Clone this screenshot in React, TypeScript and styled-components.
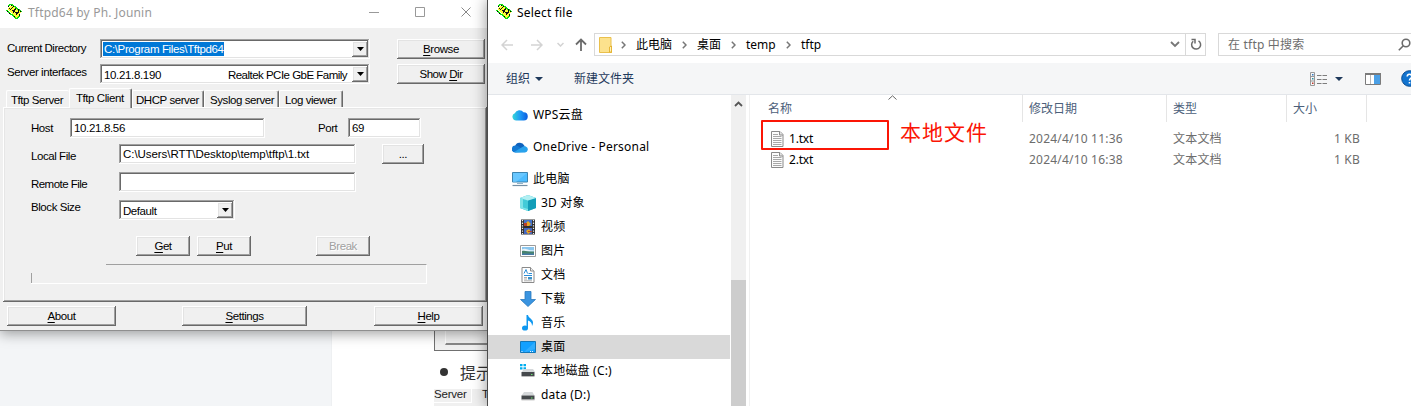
import React from 'react';
import styled, { createGlobalStyle, css } from 'styled-components';

const Global = createGlobalStyle`
  * { box-sizing: border-box; }
  html, body { margin: 0; padding: 0; overflow: hidden; background: #fff; }
  svg { display: block; flex: none; }
`;

const uiFont = css`font-family: 'Noto Sans', 'Noto Sans CJK SC', sans-serif; font-size: 12px;`;
const raised = css`box-shadow: inset -1px -1px #696969, inset 1px 1px #fff, inset -2px -2px #a0a0a0, inset 2px 2px #e3e3e3;`;
const sunken = css`box-shadow: inset -1px -1px #fff, inset 1px 1px #a0a0a0, inset -2px -2px #e3e3e3, inset 2px 2px #696969;`;

const Desktop = styled.div`
  position: relative; width: 1411px; height: 406px; overflow: hidden;
  white-space: nowrap; ${uiFont}
`;

/* ---------- document page behind the windows ---------- */
const Page = styled.div`display: flex; width: 488px; height: 406px; overflow: hidden; background: #f3f4f6;`;
const PageSide = styled.div`width: 332px; flex: none; background: #f3f5f7; box-shadow: inset -1px 0 #eef0f2;`;
const PageBody = styled.div`flex: 1; min-width: 0; padding-left: 102px; padding-top: 320px; background: #fff;`;
const Figure = styled.div`
  height: 31px; width: 70px; background: #f0f0f0; border-left: 1px solid #707070; border-bottom: 1px solid #707070;
  padding: 0 0 5px 10px;
`;
const FigureButton = styled.div`height: 25px; background: #f0f0f0; border-left: 1px solid #fff; border-bottom: 2px solid #888;`;
const BulletRow = styled.div`
  display: flex; align-items: center; height: 38px; padding: 3px 0 0 6px; gap: 12px; font-size: 16px; color: #333;
`;
const Dot = styled.i`width: 8px; height: 8px; border-radius: 50%; background: #333; flex: none;`;
const FigureTabs = styled.div`
  display: flex; gap: 10px; height: 17px; width: 70px; background: #f0f0f0; overflow: hidden; color: #222;
  font: 11.5px/11px 'Liberation Sans', Arial, sans-serif; letter-spacing: -.2px;
`;
const FigureTab = styled.span`width: 38px; height: 14px; border-right: 1px solid #fff; border-bottom: 1px solid #fff;`;

/* ---------- Tftpd64 window ---------- */
const TftpWindow = styled.section`
  position: absolute; left: 0; top: 0; width: 488px; height: 331px; background: #f0f0f0;
  border-bottom: 1px solid #8f8f8f; box-shadow: 0 3px 12px rgba(0, 0, 0, .36);
  display: flex; flex-direction: column; color: #000;
  font: 11.5px/14px 'Liberation Sans', Arial, sans-serif; letter-spacing: -.43px;
`;
const TitleBar = styled.header<{ $muted?: boolean }>`
  display: flex; align-items: center; height: 28px; flex: none; padding: 0 17px 4px 6px; gap: 6px; background: #fff;
  color: ${p => (p.$muted ? '#999' : '#000')}; ${uiFont} letter-spacing: .19px;
`;
const Caption = styled.span`flex: 1; margin-top: 2px;`;
const WindowButtons = styled.div`display: flex; gap: 36px; align-items: center;`;
const Form = styled.div`display: grid; grid-template-columns: 93px 270px 88px; column-gap: 0; row-gap: 5px; padding: 11px 0 0 7px; align-items: center;`;
const Text = styled.span<{ $ls?: number; $w?: number; $ml?: number; $shift?: number }>`
  flex: none;
  ${p => p.$ls !== undefined && `letter-spacing: ${p.$ls}px;`}
  ${p => p.$w && `width: ${p.$w}px;`}
  ${p => p.$ml && `margin-left: ${p.$ml}px;`}
  ${p => p.$shift && `margin-top: ${p.$shift}px;`}
`;
const Field = styled.div<{ $w: number; $ml?: number; $ls?: number }>`
  display: flex; align-items: center; flex: none; height: 20px; width: ${p => p.$w}px; margin-left: ${p => p.$ml || 0}px;
  padding: 0 2px 1px 4px; background: #fff; ${sunken}
  ${p => p.$ls !== undefined && `letter-spacing: ${p.$ls}px;`}
`;
const Combo = styled(Field)`padding: 0 2px 0 3px; justify-content: space-between;`;
const Selected = styled.span`background: #0078d7; color: #fff; height: 14px; line-height: 14px; width: 121px; padding-left: 1px; letter-spacing: -.37px;`;
const ComboButton = styled.span`display: grid; place-items: center; width: 16px; height: 16px; background: #f0f0f0; ${raised}`;
const Adapter = styled.span`margin: 1px 5px 0 auto; letter-spacing: -.52px;`;
const Button = styled.button<{ $w: number; $ml?: number; $off?: boolean }>`
  appearance: none; border: 0; padding: 0 0 1px; margin: 0 0 0 ${p => p.$ml || 0}px; flex: none;
  width: ${p => p.$w}px; height: 20px; background: #f0f0f0; font: inherit; letter-spacing: inherit; ${raised}
  color: ${p => (p.$off ? '#a0a0a0' : '#000')};
  ${p => p.$off && 'text-shadow: 1px 1px #fff;'}
  u { text-underline-offset: 2px; text-decoration-thickness: 1px; }
`;
const Tabs = styled.div`display: flex; align-items: flex-end; height: 20px; margin: 4px 0 -1px; padding-left: 6px; position: relative; z-index: 1;`;
const Tab = styled.div<{ $w: number; $on?: boolean; $open?: boolean; $pl?: number }>`
  width: ${p => p.$w}px; height: ${p => (p.$on ? 20 : 17)}px; margin-bottom: ${p => (p.$on ? 0 : 1)}px;
  padding: 2px 0 0 ${p => p.$pl ?? 4}px; background: #f0f0f0;
  border: solid #fff; border-width: 1px 0 0 1px; border-radius: 2px 2px 0 0;
  ${p => !p.$open && 'border-right: 1px solid #696969; box-shadow: inset -1px 0 #a0a0a0;'}
`;
const Panel = styled.div`
  margin-left: 3px; width: 484px; height: 195px; padding: 11px 0 0 28px; display: flex; flex-direction: column;
  box-shadow: inset -1px -1px #696969, inset 1px 1px #fff, inset -2px -2px #a0a0a0, inset 2px 2px #e6e6e6;
`;
const Line = styled.div<{ $mb: number }>`display: flex; align-items: center; height: 20px; flex: none; margin-bottom: ${p => p.$mb}px;`;
const Progress = styled.div`
  display: flex; align-items: flex-end; justify-content: space-between; width: 396px; height: 20px; border-bottom: 1px solid #fff;
`;
const ProgressStart = styled.i`width: 1px; height: 10px; background: #a0a0a0;`;
const ProgressTop = styled.i`width: 321px; height: 19px; border-top: 1px solid #a0a0a0; border-right: 1px solid #fff;`;
const Footer = styled.div`display: flex; padding: 4px 0 0 7px;`;

/* ---------- file dialog ---------- */
const Dialog = styled.section`
  position: absolute; left: 487px; top: 0; width: 924px; height: 406px; background: #fff; border-left: 1px solid #4c4c4c;
  box-shadow: 0 0 14px rgba(0, 0, 0, .42); display: flex; flex-direction: column; overflow: hidden; letter-spacing: .2px; line-height: 18px;
`;
const DialogTitle = styled(TitleBar)`height: 28px; padding: 0 0 4px 8px; gap: 5px;`;
const Nav = styled.div`display: flex; align-items: center; height: 36px; flex: none; padding: 5px 0 8px 13px;`;
const NavIcon = styled.span<{ $mr: number }>`margin-right: ${p => p.$mr}px;`;
const Address = styled.div`display: flex; align-items: center; width: 612px; height: 23px; flex: none; border: 1px solid #d9d9d9; padding-left: 4px;`;
const Crumb = styled.span<{ $w: number }>`width: ${p => p.$w}px; flex: none; letter-spacing: 0;`;
const CrumbArrow = styled.span`width: 5px; margin: 0 10px 0 10px; flex: none; &:first-of-type { margin-left: 9px; }`;
const Refresh = styled.span`display: grid; place-items: center; width: 20px; height: 21px; margin-left: 5px; border-left: 1px solid #d9d9d9;`;
const Search = styled.div`
  display: flex; align-items: center; justify-content: space-between; width: 200px; height: 23px; flex: none; margin-left: 12px;
  border: 1px solid #d9d9d9; padding: 0 6px 0 9px; color: #6d6d6d;
`;
const Toolbar = styled.div`
  display: flex; align-items: center; height: 31px; margin-top: -1px; flex: none; background: #f5f6f7; border-bottom: 1px solid #e3e6ea;
  padding-left: 18px; color: #1e395b; letter-spacing: 0; box-sizing: content-box;
`;
const Content = styled.div`display: flex; flex: 1; min-height: 0;`;
const Tree = styled.nav`width: 243px; flex: none; padding-top: 8px;`;
const Node = styled.div<{ $level: number; $gap?: boolean; $on?: boolean }>`
  display: flex; align-items: center; gap: 5px; height: 24px; width: 242px; padding-left: ${p => (p.$level ? 32 : 24)}px;
  margin-bottom: ${p => (p.$gap ? 8 : 0)}px; background: ${p => (p.$on ? '#d9d9d9' : 'transparent')};
`;
const Scrollbar = styled.div`width: 15px; flex: none; background: #f0f0f0; display: flex; flex-direction: column; align-items: center; justify-content: space-between; padding-top: 6px;`;
const Thumb = styled.i`width: 15px; height: 126px; background: #cdcdcd;`;
const Files = styled.div`flex: 1; min-width: 0; margin-left: 3px; border-left: 1px solid #f0f0f0; position: relative;`;
const grid = css`display: grid; grid-template-columns: 273px 144px 120px 80px; align-items: center;`;
const Head = styled.div`${grid} height: 27px; color: #4c607a; letter-spacing: 0;`;
const HeadCell = styled.div<{ $first?: boolean }>`
  height: 27px; line-height: 27px; padding-left: ${p => (p.$first ? 18 : 6)}px; border-right: 1px solid #e5e5e5;
`;
const FileRow = styled.div`${grid} height: 21px; color: #6d6d6d;`;
const Name = styled.div`display: flex; align-items: center; gap: 5px; padding-left: 21px; color: #000; letter-spacing: -.2px;`;
const Cell = styled.div<{ $right?: boolean }>`padding-left: 6px; padding-right: 7px; text-align: ${p => (p.$right ? 'right' : 'left')};`;
const Rows = styled.div`padding-top: 6px;`;
const SortMark = styled.span`position: absolute; left: 138px; top: 0;`;
const Highlight = styled.div`position: absolute; left: 11px; top: 25px; width: 128px; height: 30px; border: 2px solid #fb1505; border-radius: 1px;`;
const Note = styled.div`
  position: absolute; left: 150px; top: 24px; color: #fb1505; letter-spacing: 1px;
  font: 400 21px/28px 'Liberation Serif', 'Noto Sans CJK SC', serif;
`;

/* ---------- icons ---------- */
const AppIcon = () => (
  <svg width="16" height="16" viewBox="0 0 16 16" shapeRendering="crispEdges">
    <path d="M1 5L5 1L15 8L11 14Z" fill="#ff3" />
    <path d="M2 2L5 0L16 8M0 6L11 15L14 11" fill="none" stroke="#1d1" strokeWidth="1.3" />
    <path d="M2 3L6 1L15 8M1 7L10 14" stroke="#000" strokeWidth="1" strokeDasharray="1 2" fill="none" />
    <path d="M4 6l3-3M7 9l3-5M10 11l3-4" stroke="#111" strokeWidth="1.3" fill="none" />
    <path d="M6 6h2v1H6zM9 8h2v1H9zM3 4h1v1H3zM13 10h1v2h-1z" fill="#111" />
  </svg>
);
const Down = ({ c = '#000', w = 7 }: { c?: string; w?: number }) => (
  <svg width={w} height="4" viewBox="0 0 7 4" preserveAspectRatio="none"><path d="M0 0H7L3.5 4Z" fill={c} /></svg>
);
const Chevron = ({ d, w, h, c, s = 1.5 }: { d: string; w: number; h: number; c: string; s?: number }) => (
  <svg width={w} height={h} viewBox={`0 0 ${w} ${h}`} fill="none" stroke={c} strokeWidth={s}><path d={d} /></svg>
);
const Minimize = () => <Chevron d="M0 5.5h10" w={10} h={10} c="#999" s={1} />;
const Maximize = () => <Chevron d="M.5 .5h9v9h-9z" w={10} h={10} c="#999" s={1} />;
const Close = () => <Chevron d="M.5 .5l9 9M9.5 .5l-9 9" w={10} h={10} c="#888" s={1} />;
const Folder = () => (
  <svg width="13" height="16" viewBox="0 0 13 16"><path d="M.5.5h11.500v9H13v6H.5z" fill="#fce28d" stroke="#eac04c" /><path d="M10.500 10v5h2v-6z" fill="#fff1b8" stroke="#dfa91f" strokeWidth=".8" /></svg>
);
const FileIcon = () => (
  <svg width="13" height="16" viewBox="0 0 13 16">
    <path d="M.5.5H9L12 3.500V15.500H.5z" fill="#fcfcfc" stroke="#8a8a8a" />
    <path d="M8.500.5V4H12" fill="#e5e5e5" stroke="#8a8a8a" />
    <path d="M2 3.500h5M2 5.500h8.500M2 7.500h8.500M2 9.500h8.500M2 11.500h8.500M2 13.500h8.500" stroke="#a8a8a8" />
  </svg>
);
const icons: Record<string, React.ReactNode> = {
  wps: <><defs><linearGradient id="wps" x1="0" x2="1"><stop stopColor="#35d6d8" /><stop offset=".5" stopColor="#1e9af5" /><stop offset="1" stopColor="#0b5be0" /></linearGradient></defs><path d="M4.500 13.500A3.800 3.800 0 0 1 2.800 6.200 5 5 0 0 1 11.500 5.300a4.100 4.100 0 0 1 .3 8.200z" fill="url(#wps)" /></>,
  onedrive: <><path d="M3 7.500A5 5 0 0 1 12.300 6.500L13 9 3 12z" fill="#0f62bd" /><path d="M3.500 13.500a3.500 3.500 0 0 1-.3-7c1.800 0 3 .6 4.500 1.700L14 13z" fill="#1379d3" /><path d="M2.200 13L9.500 8.600c2-1.300 3.300-1.700 4.600-.8a3 3 0 0 1-1.100 5.700H3.500z" fill="#28a2ec" /></>,
  pc: <><path d="M.5 1.500h15v9.500H.5z" fill="#4dbcff" stroke="#3c84b0" /><path d="M1 2h14L4 11H1z" fill="#7bcfff" opacity=".6" /><path d="M5 12.500h6" stroke="#93b3c8" /><path d="M.5 14.500h15" stroke="#7590a5" strokeWidth="1.2" /></>,
  cube: <><path d="M0 3L8 0l8 3v10l-8 3-8-3z" fill="#2fc0d2" /><path d="M0 3l8 2.500V16l-8-3z" fill="#7ee3e8" /><path d="M3 4l5 1.500V14l-5-1.500z" fill="#42cbd8" /><path d="M8 5.500L16 3v10l-8 3z" fill="#129db8" /><path d="M0 3l8-3 8 3-8 2.500z" fill="#b2eff2" /></>,
  video: <><path d="M1 .5h14v15H1z" fill="#2f2f2f" /><path d="M4 1h8v6H4z" fill="#4372c9" /><path d="M4 9h8v6H4z" fill="#4568c0" /><path d="M5 5l3-3 3 3-2 2H6zM6 12l3-2 2 3-3 2z" fill="#e8a821" /><path d="M4 4h3v3H4zM8 12h4v1H8z" fill="#b9402b" /><path d="M2.500 1v14M13.500 1v14" stroke="#eee" strokeWidth="1.2" strokeDasharray="1.300 1.300" /></>,
  image: <><path d="M.5 2.500h15v11H.5z" fill="#fff" stroke="#9b9b9b" /><path d="M2 4h12v8H2z" fill="#8ac6ee" /><path d="M2 6.500c3-2 5 1 12 1v1H2z" fill="#e8f4fb" /><path d="M2 8c3-1 6 1 12 .5V12H2z" fill="#48836d" /><path d="M2 10.500h12V12H2z" fill="#467aa6" /></>,
  doc: <><path d="M2 .5h8.500L14 4v11.500H2z" fill="#fff" stroke="#8a8a8a" /><path d="M10.500.5V4H14" fill="#eee" stroke="#8a8a8a" /><path d="M4 6.500L6 2.500l1.500 4M4 8.500h8M8.500 6.500H12" fill="none" stroke="#2c8dd6" /><path d="M4 10.500h3M4 12h3M4 13.800h8" stroke="#999" strokeWidth=".8" /><path d="M8 10h4v2.500H8z" fill="#3d92c9" /></>,
  download: <path d="M5 .5h6v8h4.500L8 15.500.5 8.500H5z" fill="#3a94e0" stroke="#2878bd" strokeWidth=".8" />,
  music: <><ellipse cx="5" cy="13" rx="3" ry="2.600" fill="#0f98f0" /><path d="M6.500 13V0H8c.3 3 5 4 5 7.500 0 1.500-.4 2.500-1 3.500.2-3-1.500-4.500-4-5.500v7.500z" fill="#0f98f0" /></>,
  desktop: <><path d="M.5 2.500h15v11H.5z" fill="#12a0ff" stroke="#1477b8" /><path d="M15 3v7L6 13H4z" fill="#42b5ff" opacity=".6" /><path d="M1.500 12.500h1M10 12.500h4" stroke="#e8f5ff" strokeDasharray="1 1" /></>,
  diskc: <><path d="M0 1h2.500v2.200H0zM3.500 1H6v2.200H3.500zM0 4.200h2.500v2.200H0zM3.500 4.200H6v2.200H3.500z" fill="#00adef" /><path d="M4 6h9l2 3H1.500z" fill="#d5d8da" /><path d="M1.500 9h13v4h-13z" fill="#45494c" /><path d="M1.500 13h13v.8h-13z" fill="#aaa" /><path d="M11 11h1.500v1H11z" fill="#6be36b" /></>,
  disk: <><path d="M4 5h8.500l2 3.500H1.500z" fill="#d5d8da" /><path d="M1.500 8.500h13v4h-13z" fill="#45494c" /><path d="M1.500 12.500h13v.8h-13z" fill="#aaa" /><path d="M11 10.500h1.500v1H11z" fill="#6be36b" /></>,
};
const Icon = ({ name }: { name: string }) => <svg width="16" height="16" viewBox="0 0 16 16">{icons[name]}</svg>;

type TreeNode = { icon: string; label: string; level: number; gap?: boolean; on?: boolean };
const tree: TreeNode[] = [
  { icon: 'wps', label: 'WPS云盘', level: 0, gap: true },
  { icon: 'onedrive', label: 'OneDrive - Personal', level: 0, gap: true },
  { icon: 'pc', label: '此电脑', level: 0 },
  { icon: 'cube', label: '3D 对象', level: 1 },
  { icon: 'video', label: '视频', level: 1 },
  { icon: 'image', label: '图片', level: 1 },
  { icon: 'doc', label: '文档', level: 1 },
  { icon: 'download', label: '下载', level: 1 },
  { icon: 'music', label: '音乐', level: 1 },
  { icon: 'desktop', label: '桌面', level: 1, on: true },
  { icon: 'diskc', label: '本地磁盘 (C:)', level: 1 },
  { icon: 'disk', label: 'data (D:)', level: 1 },
];
const files = [
  { name: '1.txt', date: '2024/4/10 11:36' },
  { name: '2.txt', date: '2024/4/10 16:38' },
];
const crumbs: [string, number][] = [['此电脑', 36], ['桌面', 24], ['temp', 30], ['tftp', 20]];

const Arrow = () => <ComboButton><Down /></ComboButton>;

function Tftpd() {
  return (
    <TftpWindow>
      <TitleBar $muted>
        <AppIcon />
        <Caption>Tftpd64 by Ph. Jounin</Caption>
        <WindowButtons><Minimize /><Maximize /><Close /></WindowButtons>
      </TitleBar>
      <Form>
        <Text $ls={-.5} $shift={-2}>Current Directory</Text>
        <Combo $w={270}><Selected>C:\Program Files\Tftpd64</Selected><Arrow /></Combo>
        <Button $w={88} $ml={27}><u>B</u>rowse</Button>
        <Text $shift={-4}>Server interfaces</Text>
        <Combo $w={270}><Text $ls={-.34} $ml={1} $shift={1}>10.21.8.190</Text><Adapter>Realtek PCIe GbE Family</Adapter><Arrow /></Combo>
        <Button $w={88} $ml={27}>Show <u>D</u>ir</Button>
      </Form>
      <Tabs>
        <Tab $w={63} $open>Tftp Server</Tab>
        <Tab $w={63} $on $pl={6}>Tftp Client</Tab>
        <Tab $w={72} $pl={3}>DHCP server</Tab>
        <Tab $w={75} $pl={5}>Syslog server</Tab>
        <Tab $w={64} $pl={5}>Log viewer</Tab>
      </Tabs>
      <Panel>
        <Line $mb={6}>
          <Text $w={39}>Host</Text><Field $w={195} $ls={-.34}>10.21.8.56</Field>
          <Text $ml={53} $w={30}>Port</Text><Field $w={73}>69</Field>
        </Line>
        <Line $mb={8}>
          <Text $w={88} $shift={4}>Local File</Text><Field $w={237} $ls={-.06}>C:\Users\RTT\Desktop\temp\tftp\1.txt</Field>
          <Button $w={42} $ml={26}>...</Button>
        </Line>
        <Line $mb={8}><Text $w={88} $ls={-.54} $shift={4}>Remote File</Text><Field $w={237} /></Line>
        <Line $mb={16}><Text $w={88} $shift={-6}>Block Size</Text><Combo $w={116}><Text $ml={1} $shift={1}>Default</Text><Arrow /></Combo></Line>
        <Line $mb={8}>
          <Button $w={54} $ml={105}><u>G</u>et</Button>
          <Button $w={54} $ml={7}><u>P</u>ut</Button>
          <Button $w={54} $ml={65} $off>Break</Button>
        </Line>
        <Progress><ProgressStart /><ProgressTop /></Progress>
      </Panel>
      <Footer>
        <Button $w={109}><u>A</u>bout</Button>
        <Button $w={125} $ml={66}><u>S</u>ettings</Button>
        <Button $w={109} $ml={67}><u>H</u>elp</Button>
      </Footer>
    </TftpWindow>
  );
}

function SelectFile() {
  return (
    <Dialog>
      <DialogTitle><AppIcon /><Caption>Select file</Caption></DialogTitle>
      <Nav>
        <NavIcon $mr={18}><Chevron d="M12 6H1M6 1L1 6l5 5" w={12} h={12} c="#d3d3d3" /></NavIcon>
        <NavIcon $mr={14}><Chevron d="M0 6h11M6 1l5 5-5 5" w={12} h={12} c="#d3d3d3" /></NavIcon>
        <NavIcon $mr={11}><Chevron d="M.5 1L3.500 4l3-3" w={7} h={5} c="#d3d3d3" /></NavIcon>
        <NavIcon $mr={7}><Chevron d="M6 13V1.500M1 6.500l5-5 5 5" w={12} h={13} c="#6b6b6b" s={1.8} /></NavIcon>
        <Address>
          <Folder />
          {crumbs.map(([label, w]) => (
            <React.Fragment key={label}>
              <CrumbArrow><Chevron d="M.8 .8L4 4 .8 7.200" w={5} h={8} c="#777" /></CrumbArrow>
              <Crumb $w={w}>{label}</Crumb>
            </React.Fragment>
          ))}
          <Text $ml={349}><Chevron d="M1 1l4 4 4-4" w={10} h={7} c="#777" s={1.8} /></Text>
          <Refresh>
            <svg width="12" height="13" viewBox="0 0 12 13" fill="none" stroke="#6b6b6b" strokeWidth="1.500"><path d="M8.500 2.800A4.500 4.500 0 1 1 3.200 3.200M1.500 1.500H5V5.500" /></svg>
          </Refresh>
        </Address>
        <Search>
          在 tftp 中搜索
          <svg width="13" height="13" viewBox="0 0 13 13" fill="none" stroke="#6b6b6b" strokeWidth="1.600"><circle cx="8" cy="5" r="3.800" /><path d="M5.300 7.700L.8 12.200" /></svg>
        </Search>
      </Nav>
      <Toolbar>
        组织<Text $ml={5}><Down c="#1e395b" w={8} /></Text>
        <Text $ml={31}>新建文件夹</Text>
        <Text $ml={676}>
          <svg width="17" height="14" viewBox="0 0 17 14" fill="none">
            <path d="M.5.5h4v13h-4zM.5 4.500h4M.5 9h4" stroke="#999" /><path d="M7 3.500h10M7 7.500h10M7 11.500h10" stroke="#7d7d7d" strokeDasharray="4.500 1" />
            <path d="M2 2h1.500v1.500H2z" fill="#3578c0" /><path d="M2 6h1.500v1.500H2z" fill="#2c8fa0" /><path d="M2 10.500h1.500V12H2z" fill="#c0392b" />
          </svg>
        </Text>
        <Text $ml={8}><Down c="#1e395b" w={8} /></Text>
        <Text $ml={22}>
          <svg width="16" height="12" viewBox="0 0 16 12"><path d="M.5.5h15v11H.5z" fill="#fff" stroke="#7b7b7b" /><path d="M0 0h16v2H0z" fill="#7b7b7b" /><path d="M9 2h6v9H9z" fill="#4ba0e6" /><path d="M5.500 2v9" stroke="#bbb" /></svg>
        </Text>
        <Text $ml={20}>
          <svg width="17" height="17" viewBox="0 0 17 17"><circle cx="8.500" cy="8.500" r="7.800" fill="#1173cf" stroke="#0a4c91" /><path d="M6.200 6.500a2.300 2.300 0 1 1 3.500 2q-1.200.8-1.200 2M8.500 12v1.600" fill="none" stroke="#fff" strokeWidth="1.600" /></svg>
        </Text>
      </Toolbar>
      <Content>
        <Tree>
          {tree.map(n => <Node key={n.label} $level={n.level} $gap={n.gap} $on={n.on}><Icon name={n.icon} />{n.label}</Node>)}
        </Tree>
        <Scrollbar><Chevron d="M1 5l3.500-3.500L8 5" w={9} h={6} c="#555" s={1.8} /><Thumb /></Scrollbar>
        <Files>
          <Head>
            <HeadCell $first>名称</HeadCell><HeadCell>修改日期</HeadCell><HeadCell>类型</HeadCell><HeadCell>大小</HeadCell>
          </Head>
          <SortMark><Chevron d="M.5 4.500L4.500 .8l4 3.700" w={9} h={5} c="#666" s={1} /></SortMark>
          <Rows>
            {files.map(f => (
              <FileRow key={f.name}>
                <Name><FileIcon />{f.name}</Name><Cell>{f.date}</Cell><Cell>文本文档</Cell><Cell $right>1 KB</Cell>
              </FileRow>
            ))}
          </Rows>
          <Highlight />
          <Note>本地文件</Note>
        </Files>
      </Content>
    </Dialog>
  );
}

export default function App() {
  return (
    <Desktop>
      <Global />
      <Page>
        <PageSide />
        <PageBody>
          <Figure><FigureButton /></Figure>
          <BulletRow><Dot />提示</BulletRow>
          <FigureTabs><FigureTab>Server</FigureTab>T</FigureTabs>
        </PageBody>
      </Page>
      <Tftpd />
      <SelectFile />
    </Desktop>
  );
}
